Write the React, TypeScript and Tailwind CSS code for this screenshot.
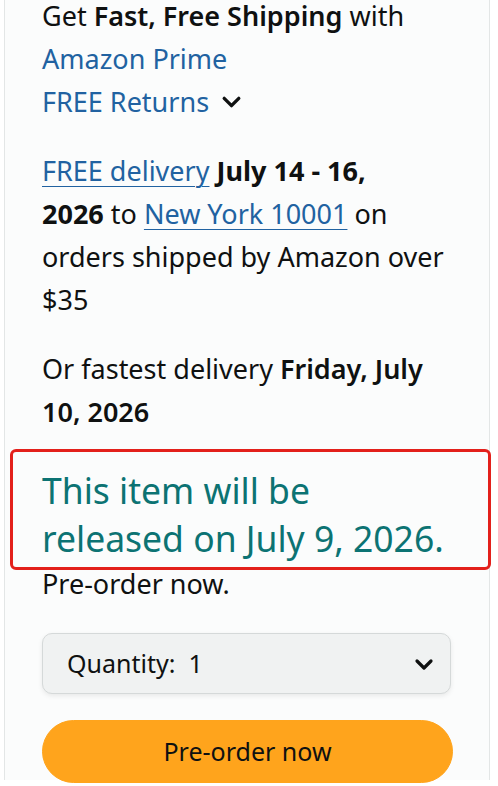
import React from "react";

function Chevron({ className }: { className?: string }) {
  return (
    <svg viewBox="0 0 24 24" className={className} fill="none" stroke="currentColor" strokeWidth="3.2" strokeLinecap="round" strokeLinejoin="round">
      <path d="M5 9l7 7 7-7" />
    </svg>
  );
}

export default function App() {
  return (
    <div className="w-[498px] h-[786px] overflow-hidden bg-white" style={{ fontFamily: '"Noto Sans", "Open Sans", sans-serif' }}>
      <div className="ml-[4px] w-[486px] h-full border-x border-[#e3e6e6] bg-[#fbfcfc] pl-[37px] pr-[36px] text-[#0f1111] text-[27px] leading-[43px]">
        <div className="-mt-[6px]">
          <p>
            Get <span className="font-semibold">Fast, Free Shipping</span> with
          </p>
          <p className="text-[#2162a1]">Amazon Prime</p>
          <p className="text-[#2162a1] flex items-center gap-[10px]">
            FREE Returns <Chevron className="w-[25px] h-[25px] text-[#0f1111]" />
          </p>
        </div>
        <p className="mt-[26px]">
          <span className="text-[#2162a1] underline underline-offset-[5px] decoration-1">FREE delivery</span>{" "}
          <span className="font-bold">July 14 - 16,</span>
          <br />
          <span className="font-bold">2026</span> to{" "}
          <span className="text-[#2162a1] underline underline-offset-[5px] decoration-1">New York 10001</span> on
          <br />
          orders shipped by Amazon over
          <br />
          $35
        </p>
        <p className="mt-[26px]">
          Or fastest delivery <span className="font-semibold">Friday, July</span>
          <br />
          <span className="font-semibold">10, 2026</span>
        </p>
        <div className="-ml-[32px] w-[481px] mt-[16px] border-[3px] border-[#e3201b] rounded-[6px] pl-[29px] pt-[14px] pb-[5px]">
          <p className="text-[#0c7373] text-[35.5px] leading-[48px]">
            This item will be
            <br />
            released on July 9, 2026.
          </p>
        </div>
        <p className="-mt-[8px]">Pre-order now.</p>
        <div className="mt-[28px] h-[61px] w-[409px] rounded-[10px] border border-[#d5d9d9] bg-[#f0f2f2] flex items-center justify-between pl-[24px] pr-[14px] shadow-[0_2px_5px_rgba(15,17,17,0.08)]">
          <span className="text-[25px]">Quantity:&nbsp; 1</span>
          <Chevron className="w-[24px] h-[24px]" />
        </div>
        <div className="mt-[26px] h-[63px] w-[411px] rounded-full bg-[#ffa41c] border border-[#ffa41c] flex items-center justify-center">
          <span className="text-[25px]">Pre-order now</span>
        </div>
      </div>
    </div>
  );
}
